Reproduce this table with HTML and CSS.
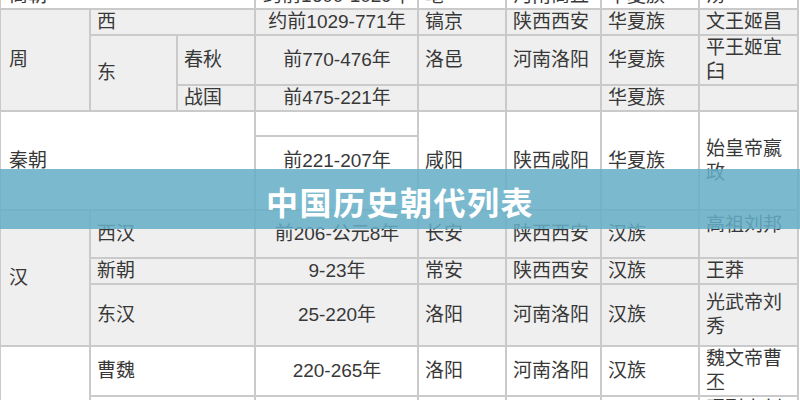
FILE: index.html
```html
<!DOCTYPE html>
<html lang="zh-CN">
<head>
<meta charset="utf-8">
<title>中国历史朝代列表</title>
<link rel="stylesheet" href="styles.css">
</head>
<body>
<table class="dyn">
  <colgroup>
    <col class="c1"><col class="c2"><col class="c3"><col class="c4"><col class="c5"><col class="c6"><col class="c7"><col class="c8">
  </colgroup>
  <tbody class="white">
    <tr class="r26"><td colspan="3" class="first">商朝</td><td class="ctr">约前1600-1029年</td><td>亳</td><td>河南商丘</td><td>华夏族</td><td>汤</td></tr>
  </tbody>
  <tbody class="gray">
    <tr class="r25"><td rowspan="3" class="first">周</td><td colspan="2">西</td><td class="ctr">约前1029-771年</td><td>镐京</td><td>陕西西安</td><td>华夏族</td><td>文王姬昌</td></tr>
    <tr class="r50"><td rowspan="2">东</td><td>春秋</td><td class="ctr">前770-476年</td><td>洛邑</td><td>河南洛阳</td><td>华夏族</td><td>平王姬宜臼</td></tr>
    <tr class="r26"><td>战国</td><td class="ctr">前475-221年</td><td></td><td></td><td>华夏族</td><td></td></tr>
  </tbody>
  <tbody class="white">
    <tr class="r25"><td colspan="3" rowspan="2" class="first">秦朝</td><td class="ctr"></td><td rowspan="2">咸阳</td><td rowspan="2">陕西咸阳</td><td rowspan="2">华夏族</td><td rowspan="2">始皇帝嬴政</td></tr>
    <tr class="r74"><td class="ctr upper">前221-207年</td></tr>
  </tbody>
  <tbody class="gray">
    <tr class="r48"><td rowspan="3" class="first">汉</td><td colspan="2">西汉</td><td class="ctr">前206-公元8年</td><td>长安</td><td>陕西西安</td><td>汉族</td><td class="top">高祖刘邦</td></tr>
    <tr class="r26"><td colspan="2">新朝</td><td class="ctr">9-23年</td><td>常安</td><td>陕西西安</td><td>汉族</td><td>王莽</td></tr>
    <tr class="r62"><td colspan="2">东汉</td><td class="ctr">25-220年</td><td>洛阳</td><td>河南洛阳</td><td>汉族</td><td>光武帝刘秀</td></tr>
  </tbody>
  <tbody class="white">
    <tr class="r50"><td rowspan="3" class="first">三国</td><td colspan="2">曹魏</td><td class="ctr">220-265年</td><td>洛阳</td><td>河南洛阳</td><td>汉族</td><td>魏文帝曹丕</td></tr>
    <tr class="r50"><td colspan="2">蜀汉</td><td class="ctr">221-263年</td><td>成都</td><td>四川成都</td><td>汉族</td><td>昭烈帝刘备</td></tr>
    <tr class="r50"><td colspan="2">东吴</td><td class="ctr">222-280年</td><td>建业</td><td>江苏南京</td><td>汉族</td><td>大帝孙权</td></tr>
  </tbody>
</table>
<div class="banner">中国历史朝代列表</div>
</body>
</html>
```
FILE: styles.css
```css
html, body {
  margin: 0;
  padding: 0;
}
body {
  width: 800px;
  height: 400px;
  overflow: hidden;
  position: relative;
  background: #ffffff;
  font-family: "Liberation Sans", "Noto Sans CJK SC", sans-serif;
}
.dyn {
  border-collapse: collapse;
  table-layout: fixed;
  width: 799px;
  margin-top: -18px;
  margin-left: -1px;
  font-size: 19px;
  line-height: 24px;
  color: #383838;
}
.c1 { width: 90px; }
.c2 { width: 87px; }
.c3 { width: 78px; }
.c4 { width: 163px; }
.c5 { width: 88px; }
.c6 { width: 95px; }
.c7 { width: 98px; }
.c8 { width: 99px; }
.dyn td {
  border: 2px solid #cacaca;
  padding: 0 5px 0 6px;
  vertical-align: middle;
  text-align: left;
  overflow: hidden;
}
.dyn td.first { padding-left: 8px; }
.dyn td.ctr { text-align: center; }
.dyn td.top { vertical-align: top; padding-top: 2px; }
.dyn td.upper { vertical-align: top; padding-top: 12px; }
.white td { background: #ffffff; }
.gray td { background: #efefef; }
.r25 { height: 25px; }
.r26 { height: 26px; }
.r48 { height: 48px; }
.r50 { height: 50px; }
.r62 { height: 62px; }
.r74 { height: 74px; }
.banner {
  position: absolute;
  left: 0;
  top: 169px;
  width: 800px;
  height: 60px;
  background: rgba(100, 174, 198, 0.86);
  display: flex;
  align-items: center;
  justify-content: center;
  color: #ffffff;
  font-family: "Noto Sans CJK SC", sans-serif;
  font-weight: 700;
  font-size: 32px;
  letter-spacing: 1.5px;
  padding-top: 4px;
  box-sizing: border-box;
}
```
